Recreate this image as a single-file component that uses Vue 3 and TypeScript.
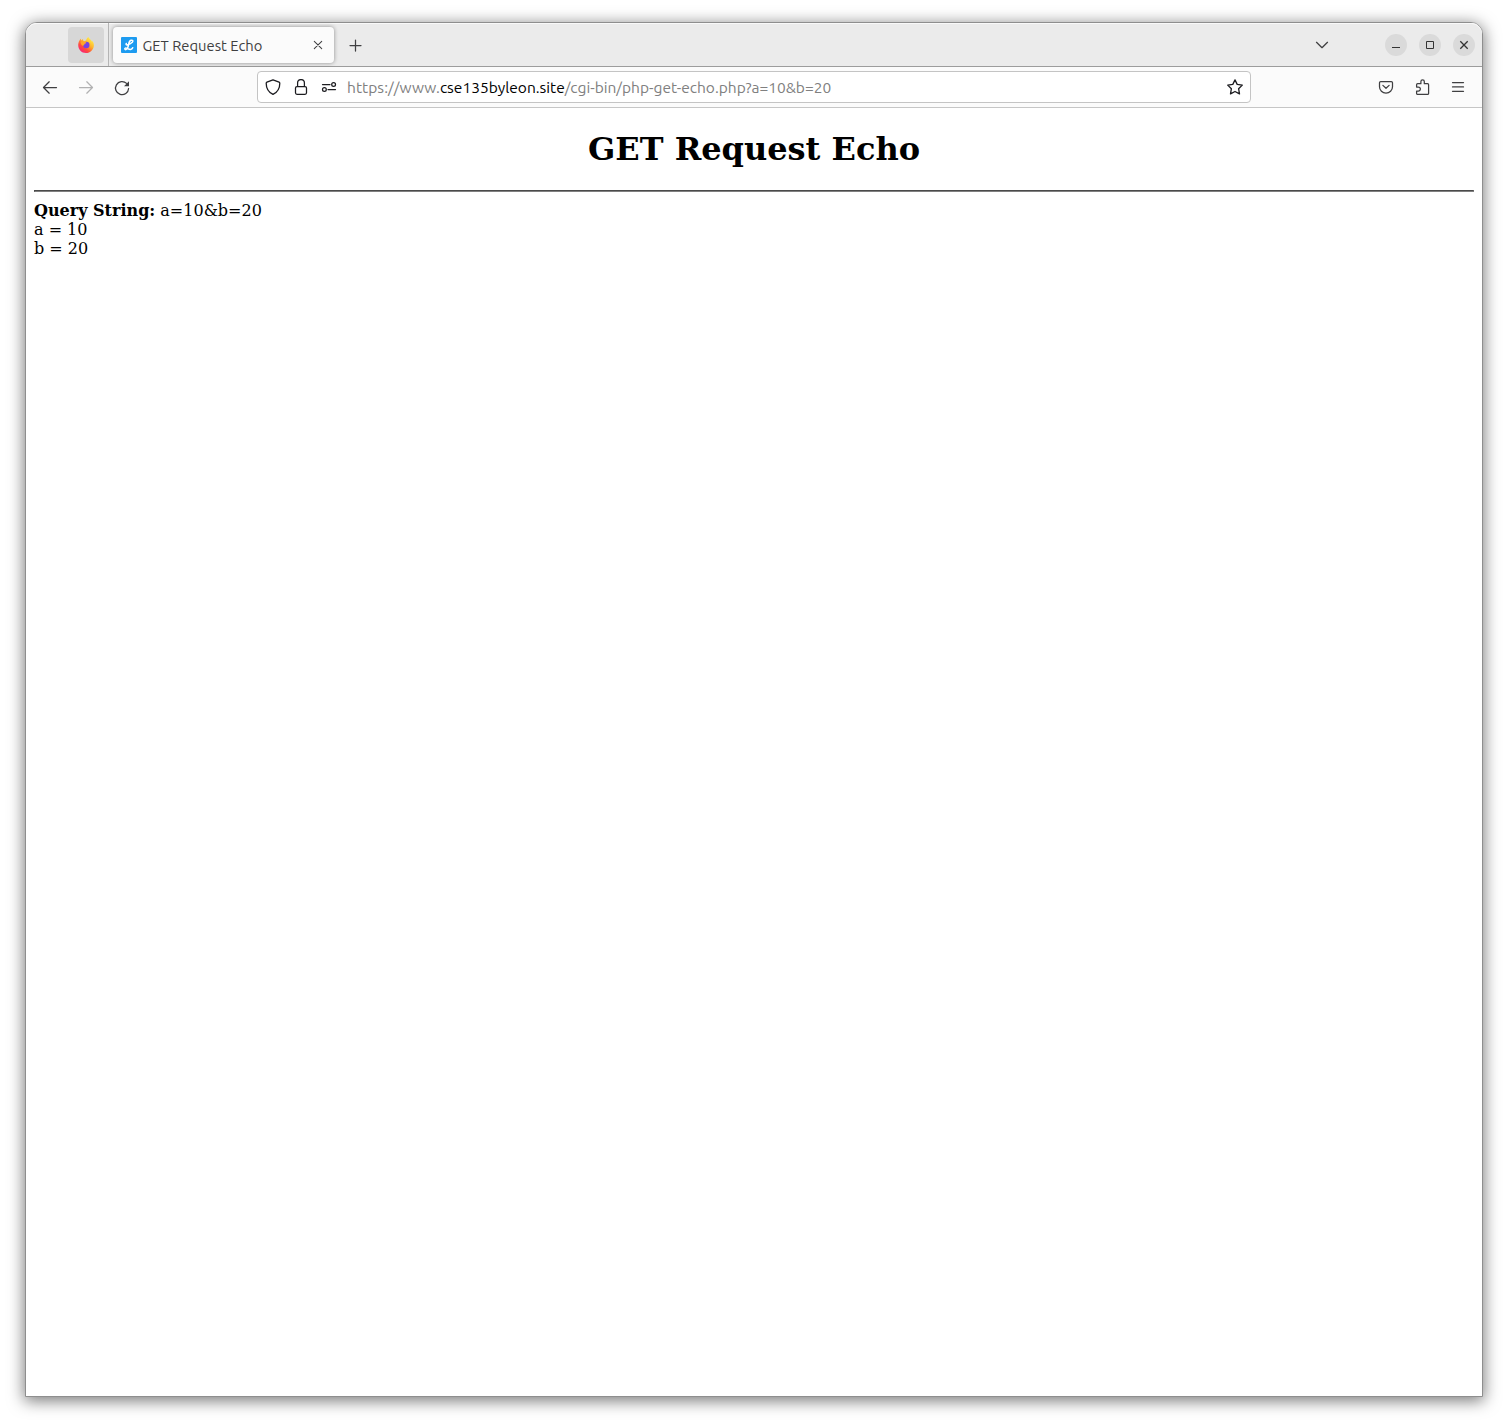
<script setup lang="ts">
interface QueryParam {
  name: string
  value: string
}

const title = 'GET Request Echo'
const host = 'cse135byleon.site'
const params: QueryParam[] = [
  { name: 'a', value: '10' },
  { name: 'b', value: '20' },
]
const query = params.map((p) => `${p.name}=${p.value}`).join('&')
const path = `/cgi-bin/php-get-echo.php?${query}`
</script>

<template>
  <div class="desktop">
    <div class="window">
      <header class="tabbar">
        <div class="pinned">
          <svg width="16" height="16" viewBox="0 0 16 16">
            <defs>
              <linearGradient id="flame" x1="0.85" y1="0.1" x2="0.2" y2="0.95">
                <stop offset="0" stop-color="#fff14a" />
                <stop offset="0.4" stop-color="#ffb02a" />
                <stop offset="0.7" stop-color="#ff4d3c" />
                <stop offset="1" stop-color="#f8207a" />
              </linearGradient>
            </defs>
            <path fill="url(#flame)" d="M15.3 5.4c-.3-.8-1-1.700-1.600-2 .5 1 .7 1.700.7 2.200C13.500 3.300 11.800 2.500 10.700.6c-.2-.3-.2-.5-.2-.6-1.700 1-2.300 2.600-2.300 3.600-.9 0-1.600.300-2.200.6C5.300 3.800 4.900 3 5 2c-.8.400-1.400 1-1.800 1.500-.3-.4-.3-1.600-.2-1.900C2 2.400.8 4.300.4 6.600-.6 11.600 3 16 8 16c4.300 0 7.900-3.500 7.900-7.800 0-1-.2-1.900-.6-2.800z" />
            <circle cx="8.300" cy="8" r="3.200" fill="#7542e5" />
            <path fill="#ffa52a" d="M2.800 4.700C4 3.800 5.800 4 6.600 5c1 .1 1.800.2 1.700.7-.1.600-1.600.8-1.900 1.500-.1.700-.7 1.300-1.600 1.600C3.500 8.500 2.500 6.500 2.800 4.700z" />
          </svg>
        </div>
        <div class="separator"></div>
        <div class="tab">
          <span class="favicon">
            <svg width="16" height="16" viewBox="0 0 16 16" fill="none" stroke="#fff" stroke-linecap="round" stroke-linejoin="round">
              <path stroke-width="1.500" d="M11.300 5.200C12.500 3.800 11.600 2.800 10 3.300 8 4 7.900 6 7.500 8c-.4 2.500-1.200 4.200-2.500 4.600-1.300.2-1.600-1.200-.5-1.500 1.600-.3 3.200 1.500 5 1.300 1.200-.1 1.900-.8 2.200-1.600M5.300 6.500C4.600 7.600 5.400 8.200 6.700 7.800 8.200 7.500 9.700 6.700 11.300 5.200" />
            </svg>
          </span>
          <span class="tab-label">{{ title }}</span>
          <svg class="tab-close" width="10" height="10" viewBox="0 0 10 10" stroke="#3f3f41" stroke-width="1.050" stroke-linecap="round">
            <path d="M1.300 1.300l7.400 7.400M8.700 1.300L1.300 8.700" />
          </svg>
        </div>
        <svg class="new-tab" width="14" height="14" viewBox="0.5 0.5 14 14" stroke="#3f3f41" stroke-width="1.250" stroke-linecap="round">
          <path d="M7 1.500v11M1.500 7h11" />
        </svg>
        <svg class="list-tabs" width="14" height="14" viewBox="0 0 14 14" fill="none" stroke="#3f3f41" stroke-width="1.250" stroke-linecap="round" stroke-linejoin="round">
          <path d="M1.500 4.300L7 9.700l5.500-5.400" />
        </svg>
        <div class="controls">
          <span class="control"><svg width="22" height="22"><path d="M7 13.500h8" stroke="#333" /></svg></span>
          <span class="control"><svg width="22" height="22"><path d="M7.500 7.500h7v7h-7z" fill="none" stroke="#333" /></svg></span>
          <span class="control"><svg width="22" height="22"><path d="M7.300 7.300l7.400 7.400M14.700 7.300l-7.400 7.400" stroke="#333" stroke-width="1.300" /></svg></span>
        </div>
      </header>

      <nav class="navbar">
        <svg class="nav-icon" width="16" height="16" viewBox="0 0.5 16 16" fill="none" stroke="#3f3f41" stroke-width="1.250" stroke-linecap="round" stroke-linejoin="round">
          <path d="M14.500 8H1.600M7.200 2.300L1.500 8l5.700 5.700" />
        </svg>
        <svg class="nav-icon" width="16" height="16" viewBox="0 0.5 16 16" fill="none" stroke="#b1b1b2" stroke-width="1.250" stroke-linecap="round" stroke-linejoin="round">
          <path d="M1.500 8h12.900M8.800 2.300L14.500 8l-5.700 5.700" />
        </svg>
        <svg class="nav-icon" width="16" height="16" viewBox="0 0 16 16" fill="none" stroke="#3f3f41" stroke-width="1.250" stroke-linecap="round">
          <path d="M12.600 3.400A6.550 6.550 0 1 0 14.600 8.500" />
          <path d="M15 1.200v5h-5z" fill="#3f3f41" stroke="none" />
        </svg>
        <div class="urlbar">
          <svg width="16" height="16" viewBox="0 0 16 16" fill="none" stroke="#1c1c20" stroke-width="1.300" stroke-linejoin="round">
            <path d="M8 .8L14.100 3.200c.4.200.7.500.7 1C14.800 9.200 12.500 13.200 8 15.400 3.500 13.200 1.200 9.200 1.200 4.200c0-.5.3-.8.7-1z" />
          </svg>
          <svg width="16" height="16" viewBox="0 0 16 16" fill="none" stroke="#1c1c20" stroke-width="1.250">
            <rect x="2.500" y="7.500" width="11" height="7.800" rx="1.500" />
            <path d="M4.600 7.500V4a3.400 3.400 0 0 1 6.800 0v3.500" />
          </svg>
          <svg width="16" height="16" viewBox="0 0 16 16" fill="none" stroke="#1c1c20" stroke-width="1.250" stroke-linecap="round">
            <path d="M1.500 5.500H9M7 10.500h7.500" />
            <circle cx="12.600" cy="5.500" r="1.900" />
            <circle cx="3.400" cy="10.500" r="1.900" />
          </svg>
          <div class="url"><span class="scheme">https://www.</span><span class="host">{{ host }}</span><span>{{ path }}</span></div>
          <svg class="star" width="16" height="16" viewBox="0 0 16 16" fill="none" stroke="#1c1c20" stroke-width="1.300" stroke-linejoin="round">
            <path d="M8 .9l2.200 4.500 5.100.7-3.700 3.600.9 5.200L8 12.500l-4.500 2.400.9-5.200L.7 6.100l5.100-.7z" />
          </svg>
        </div>
        <div class="actions">
          <svg width="16" height="16" viewBox="0 0 16 16" fill="none" stroke="#3f3f41" stroke-width="1.250" stroke-linecap="round" stroke-linejoin="round">
            <path d="M2.700 2.500h10.600c.7 0 1.200.5 1.200 1.200v4a6.500 6.500 0 0 1-13 0v-4c0-.7.500-1.200 1.200-1.200z" />
            <path d="M4.900 6.400L8 9.300l3.100-2.900" />
          </svg>
          <svg width="16" height="16" viewBox="-0.5 0 16 16" fill="none" stroke="#3f3f41" stroke-width="1.250" stroke-linejoin="round">
            <path d="M2.100 8V5.700c0-.6.400-1 1-1h3.300V2.600a1.700 1.700 0 0 1 3.400 0v2.100h3.300c.6 0 1 .4 1 1v8.700c0 .6-.4 1-1 1h-10c-.6 0-1-.4-1-1v-2.300h1.700a2 2 0 0 0 0-4.100z" />
          </svg>
          <svg width="16" height="16" viewBox="0 0 16 16" stroke="#3f3f41" stroke-width="1.250" stroke-linecap="round">
            <path d="M2.500 3.500h11M2.500 7.900h11M2.500 12.300h11" />
          </svg>
        </div>
      </nav>

      <main class="page">
        <h1>{{ title }}</h1>
        <hr />
        <b>Query String:</b> {{ query }}<br />
        <template v-for="p in params" :key="p.name">{{ p.name }} = {{ p.value }}<br /></template>
      </main>
    </div>
  </div>
</template>

<style>
body {
  margin: 0;
  background: #fff;
}
</style>

<style scoped>
.desktop {
  box-sizing: border-box;
  height: 1425px;
  padding: 22px 25px 28px;
  overflow: hidden;
}
.window {
  box-sizing: border-box;
  display: flex;
  flex-direction: column;
  height: 1375px;
  border: 1px solid #8e8e8e;
  border-radius: 12px 12px 0 0;
  background: #fff;
  box-shadow: 0 3px 16px 1px rgba(0, 0, 0, 0.52);
}
svg {
  display: block;
  flex: none;
}
.tabbar {
  box-sizing: border-box;
  display: flex;
  align-items: center;
  height: 44px;
  padding: 0 7px 0 42px;
  border-bottom: 1px solid #9c9c9c;
  border-radius: 11px 11px 0 0;
  background: #ebebeb;
  box-shadow: inset 0 1px #f9f9f9;
  font-family: Ubuntu, "Noto Sans", sans-serif;
}
.pinned {
  display: flex;
  align-items: center;
  justify-content: center;
  width: 36px;
  height: 36px;
  margin-top: 1px;
  border-radius: 4px;
  background: #d7d7d7;
}
.separator {
  width: 1px;
  height: 43px;
  margin: 0 4px;
  background: #b5b5b5;
}
.tab {
  box-sizing: border-box;
  display: flex;
  align-items: center;
  width: 221px;
  height: 36px;
  margin-top: 1px;
  padding: 0 11px 0 8px;
  border-radius: 4px;
  background: #fbfbfb;
  box-shadow: 0 0 4px rgba(0, 0, 0, 0.4);
}
.favicon {
  width: 16px;
  height: 16px;
  border-radius: 1px;
  background: #1d9bf0;
}
.tab-label {
  margin: 2px 0 0 5.5px;
  color: #3f3f41;
  font-size: 14.75px;
  line-height: 18px;
  white-space: nowrap;
}
.tab-close {
  margin-left: auto;
}
.new-tab {
  margin: 2px 0 0 15px;
}
.list-tabs {
  margin-left: auto;
}
.controls {
  display: flex;
  gap: 12px;
  margin-left: 56px;
}
.control {
  width: 22px;
  height: 22px;
  border-radius: 50%;
  background: #dadada;
}
.navbar {
  box-sizing: border-box;
  display: flex;
  align-items: center;
  height: 41px;
  padding: 0 16px;
  border-bottom: 1px solid #c6c6c6;
  background: #fbfbfb;
}
.nav-icon {
  margin: 1px 20px 0 0;
}
.urlbar {
  box-sizing: border-box;
  display: flex;
  align-items: center;
  gap: 12px;
  width: 994px;
  height: 32px;
  margin-left: 107px;
  padding: 0 7px;
  border: 1px solid #c4c4c4;
  border-radius: 4px;
  background: #fff;
}
.url {
  display: flex;
  margin: 2px 0 0 -2px;
  color: #808080;
  font: 15.53px/20px Ubuntu, "Noto Sans", sans-serif;
  white-space: nowrap;
}
.scheme {
  letter-spacing: 0.06px;
}
.host {
  color: #000;
}
.star {
  margin-left: auto;
}
.actions {
  display: flex;
  gap: 20px;
  margin-left: auto;
}
.page {
  flex: 1;
  padding: 0 8px;
  color: #000;
  font: 16px/19px "DejaVu Serif", serif;
}
h1 {
  margin: 22px 0;
  font-size: 32px;
  line-height: 38px;
  text-align: center;
}
hr {
  height: 0;
  margin: 8px 0 9px;
  border: 1px solid;
  border-color: #4a4a4a #808080 #808080 #4a4a4a;
}
</style>
